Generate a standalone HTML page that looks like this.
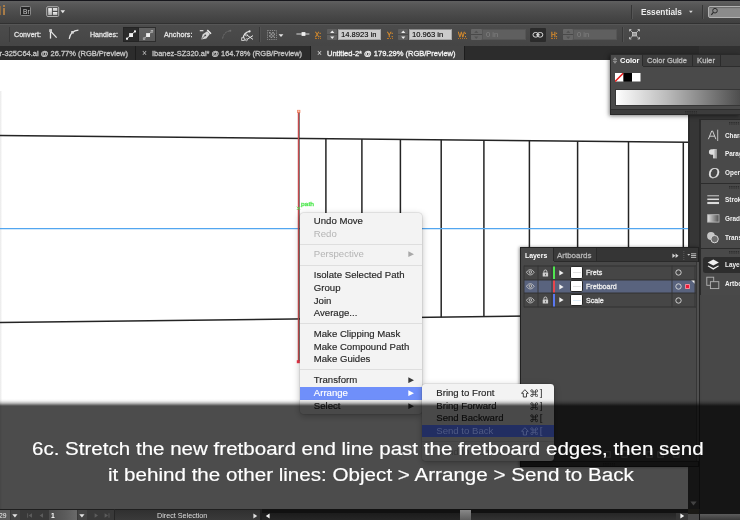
<!DOCTYPE html>
<html><head><meta charset="utf-8"><title>Illustrator</title>
<style>
html,body{margin:0;padding:0;}
body{width:740px;height:520px;overflow:hidden;position:relative;background:#3c3c3c;font-family:"Liberation Sans",sans-serif;}
#root{position:absolute;left:0;top:0;width:740px;height:520px;overflow:hidden;will-change:transform;}
span{display:block}
</style></head><body><div id="root">
<div style="position:absolute;left:0px;top:60px;width:688px;height:460px;background:#ffffff;"></div>
<div style="position:absolute;left:0px;top:91px;width:2.4px;height:430px;background:linear-gradient(90deg,#ebebeb,#f1f1f1 55%,#ffffff);"></div>
<svg style="position:absolute;left:0px;top:0px;" width="740" height="520" viewBox="0 0 740 520"><line x1="0" y1="135.40" x2="688" y2="142.35" stroke="#242424" stroke-width="1.5"/><line x1="0" y1="322.60" x2="688" y2="314.10" stroke="#242424" stroke-width="1.5"/><line x1="325.9" y1="138.69" x2="325.9" y2="318.58" stroke="#242424" stroke-width="1.5"/><line x1="361.9" y1="139.06" x2="361.9" y2="318.13" stroke="#242424" stroke-width="1.5"/><line x1="400.4" y1="139.44" x2="400.4" y2="317.66" stroke="#242424" stroke-width="1.5"/><line x1="441.2" y1="139.86" x2="441.2" y2="317.15" stroke="#242424" stroke-width="1.5"/><line x1="483.9" y1="140.29" x2="483.9" y2="316.62" stroke="#242424" stroke-width="1.5"/><line x1="529.4" y1="140.75" x2="529.4" y2="316.06" stroke="#242424" stroke-width="1.5"/><line x1="577.6" y1="141.23" x2="577.6" y2="315.47" stroke="#242424" stroke-width="1.5"/><line x1="628.5" y1="141.75" x2="628.5" y2="314.84" stroke="#242424" stroke-width="1.5"/><line x1="683.3" y1="142.30" x2="683.3" y2="314.16" stroke="#242424" stroke-width="1.5"/><line x1="0" y1="228.6" x2="688" y2="228.6" stroke="#52a6f0" stroke-width="1.25"/><line x1="299.1" y1="112" x2="299.1" y2="361" stroke="#4a3434" stroke-width="1.1"/><line x1="298.4" y1="111" x2="298.4" y2="362" stroke="#c64a4c" stroke-width="1.25"/><rect x="297.100" y="109.900" width="3.200" height="3" fill="#ee7a58"/><rect x="297.700" y="110.500" width="1.900" height="1.300" fill="#ffd2c0"/><rect x="296.8" y="360.2" width="3" height="3" fill="#ea3648"/><path d="M296.9 206.7l3.2 3.2m0-3.2l-3.2 3.2" stroke="#4ee44e" stroke-width=".9"/></svg>
<span style="position:absolute;top:200px;line-height:8px;font-size:5.4px;white-space:pre;color:#52e852;-webkit-text-stroke:.3px #52e852;left:301.10px;transform-origin:0 50%;transform:scaleX(1.237);">path</span>
<div style="position:absolute;left:0px;top:0px;width:740px;height:24px;background:linear-gradient(#626262,#575757 20%,#4d4d4d 48%,#454545 75%,#3f3f3f);"></div>
<div style="position:absolute;left:0px;top:0px;width:740px;height:1px;background:#17171c;"></div>
<div style="position:absolute;left:0px;top:23px;width:740px;height:1px;background:#313131;"></div>
<div style="position:absolute;left:0px;top:5.5px;width:1px;height:9.3px;background:#8e6a40;"></div>
<div style="position:absolute;left:2.8px;top:8px;width:1.8px;height:6.7px;background:#a87c48;"></div>
<div style="position:absolute;left:2.8px;top:5.3px;width:1.8px;height:1.6px;background:#a87c48;"></div>
<div style="position:absolute;left:20px;top:6px;width:9px;height:8.4px;background:#262626;border:1px solid #8a8a8a;border-radius:1.500px;box-sizing:content-box;"></div>
<span style="position:absolute;top:7px;line-height:10px;font-size:6.8px;white-space:pre;color:#cfcfcf;left:22.60px;transform-origin:0 50%;transform:scaleX(0.971);">Br</span>
<svg style="position:absolute;left:45.5px;top:5.5px;" width="20" height="13" viewBox="0 0 20 13"><rect x=".7" y=".7" width="12" height="9.800" rx="1.200" fill="#4a4a4a" stroke="#b0b0b0" stroke-width="1"/><defs><linearGradient id="lg1" x1="0" y1="0" x2="0" y2="1"><stop offset="0" stop-color="#f6f6f6"/><stop offset="1" stop-color="#b0b0b0"/></linearGradient></defs><rect x="2.200" y="2.100" width="3.700" height="7" fill="url(#lg1)"/><rect x="6.900" y="2.100" width="4.400" height="2.900" fill="url(#lg1)"/><rect x="6.900" y="6" width="4.400" height="3.100" fill="url(#lg1)"/><path d="M14.500 4.300h4.600l-2.300 3z" fill="#e6e6e6"/></svg>
<div style="position:absolute;left:631px;top:4.5px;width:1px;height:14px;background:#363636;"></div>
<div style="position:absolute;left:632px;top:4.5px;width:1px;height:14px;background:#555;"></div>
<span style="position:absolute;top:7px;line-height:11px;font-size:8.2px;white-space:pre;color:#efefef;font-weight:bold;left:641.00px;transform-origin:0 50%;transform:scaleX(1.011);">Essentials</span>
<svg style="position:absolute;left:688px;top:9.8px;" width="6" height="4" viewBox="0 0 6 4"><path d="M1 .8h3.800l-1.900 2.300z" fill="#d8d8d8"/></svg>
<div style="position:absolute;left:702px;top:4.5px;width:1px;height:14px;background:#363636;"></div>
<div style="position:absolute;left:703px;top:4.5px;width:1px;height:14px;background:#555;"></div>
<div style="position:absolute;left:707.5px;top:5.5px;width:40px;height:12.4px;background:#8b8b8b;border:1px solid #b2b2b2;border-radius:2px;box-sizing:border-box;box-shadow:inset 0 1px 1px rgba(0,0,0,.25);"></div>
<svg style="position:absolute;left:709.5px;top:7px;" width="9" height="9" viewBox="0 0 9 9"><circle cx="5" cy="3.700" r="2.300" fill="none" stroke="#2c2c2c" stroke-width="1"/><path d="M3.400 5.400L1.300 7.900" stroke="#2c2c2c" stroke-width="1.200"/></svg>
<div style="position:absolute;left:0px;top:24px;width:740px;height:22px;background:linear-gradient(#4c4c4c,#454545);"></div>
<div style="position:absolute;left:0px;top:24px;width:740px;height:1px;background:#565656;"></div>
<div style="position:absolute;left:8.5px;top:27px;width:1px;height:15px;background:#3a3a3a;"></div>
<span style="position:absolute;top:29px;line-height:11px;font-size:7.9px;white-space:pre;color:#e4e4e4;-webkit-text-stroke:.3px #e4e4e4;left:13.50px;transform-origin:0 50%;transform:scaleX(0.904);">Convert:</span>
<svg style="position:absolute;left:47px;top:28px;" width="12" height="12" viewBox="0 0 12 12"><path d="M3.5 1.6v9" stroke="#e8e8e8" stroke-width="1.3"/><path d="M3.8 3.4L9.6 9.6" stroke="#e8e8e8" stroke-width="1.2"/><rect x="2.2" y="1.2" width="2.8" height="2.8" fill="#cfcfcf"/></svg>
<svg style="position:absolute;left:67px;top:28px;" width="13" height="12" viewBox="0 0 13 12"><path d="M2.2 10.8C3 6.2 5.4 2.6 11.4 2.2" fill="none" stroke="#e8e8e8" stroke-width="1.2"/><rect x="4.2" y="3" width="2.6" height="2.6" fill="#d8d8d8"/></svg>
<span style="position:absolute;top:29px;line-height:11px;font-size:7.9px;white-space:pre;color:#e4e4e4;-webkit-text-stroke:.3px #e4e4e4;left:89.50px;transform-origin:0 50%;transform:scaleX(0.898);">Handles:</span>
<div style="position:absolute;left:123px;top:27px;width:16.4px;height:14.6px;background:#2b2b2b;border:1px solid #242424;box-sizing:border-box;"></div>
<div style="position:absolute;left:139.4px;top:27px;width:17px;height:14.6px;background:linear-gradient(#626262,#585858);border:1px solid #2e2e2e;border-left:none;box-sizing:border-box;"></div>
<svg style="position:absolute;left:125px;top:28.5px;" width="12" height="12" viewBox="0 0 12 12"><path d="M2 9.600L10 2.400" stroke="#dcdcdc" stroke-width=".9"/><rect x="4.100" y="4.100" width="3.900" height="3.900" fill="#f0f0f0"/><rect x="1" y="8.700" width="2" height="2" fill="#f4f4f4"/><rect x="9" y="1.400" width="2" height="2" fill="#f4f4f4"/></svg>
<svg style="position:absolute;left:141.7px;top:28.5px;" width="12" height="12" viewBox="0 0 12 12"><path d="M2 9.600L10 2.400" stroke="#c4c4c4" stroke-width=".8"/><rect x="4.100" y="4.100" width="3.900" height="3.900" fill="#ededed"/><rect x="1.200" y="8.900" width="1.700" height="1.700" fill="#5c5c5c" stroke="#c8c8c8" stroke-width=".6"/><rect x="9.100" y="1.500" width="1.700" height="1.700" fill="#5c5c5c" stroke="#c8c8c8" stroke-width=".6"/></svg>
<span style="position:absolute;top:29px;line-height:11px;font-size:7.9px;white-space:pre;color:#e4e4e4;-webkit-text-stroke:.3px #e4e4e4;left:164.00px;transform-origin:0 50%;transform:scaleX(0.914);">Anchors:</span>
<svg style="position:absolute;left:198.5px;top:29px;" width="13" height="12" viewBox="0 0 13 12"><path d="M2.200 10.400L3.700 5.200 8.200 2.200 10.800 5 7.400 9.400z" fill="#d4d4d4"/><path d="M2.400 10.200L6 6.600" stroke="#4a4a4a" stroke-width=".8"/><circle cx="6.300" cy="6.300" r=".9" fill="#4a4a4a"/><path d="M8.300 1L12 4.800" stroke="#ececec" stroke-width="1.500"/><path d="M.8 1.700h3.600" stroke="#ececec" stroke-width="1.100"/></svg>
<svg style="position:absolute;left:220.5px;top:29px;" width="12" height="12" viewBox="0 0 12 12"><path d="M1.600 9.600C2.200 5.400 4.600 2.600 8.800 1.800" fill="none" stroke="#6c6c6c" stroke-width="1" stroke-dasharray="2.200 .8"/><circle cx="9.300" cy="1.700" r="1" fill="#6c6c6c"/></svg>
<svg style="position:absolute;left:240.5px;top:28.5px;" width="14" height="13" viewBox="0 0 14 13"><path d="M2 9.800C2.400 5.800 4.600 3.200 8.400 2.400" fill="none" stroke="#e4e4e4" stroke-width="1.100"/><rect x=".7" y="8.800" width="2.600" height="2.600" fill="#4a4a4a" stroke="#e4e4e4" stroke-width=".8"/><circle cx="8.600" cy="2.300" r="1.100" fill="#e4e4e4"/><path d="M6 6.200L12 10.400M6 10.400L12 6.600" stroke="#e4e4e4" stroke-width="1"/><circle cx="5.400" cy="10.800" r="1" fill="none" stroke="#e4e4e4" stroke-width=".7"/><circle cx="5.400" cy="6" r="1" fill="none" stroke="#e4e4e4" stroke-width=".7"/></svg>
<div style="position:absolute;left:259px;top:27px;width:1px;height:15px;background:#383838;"></div>
<div style="position:absolute;left:260px;top:27px;width:1px;height:15px;background:#525252;"></div>
<svg style="position:absolute;left:267px;top:29.5px;" width="18" height="11" viewBox="0 0 18 11"><rect x=".5" y=".5" width="9" height="9" fill="none" stroke="#9a9a9a" stroke-width=".8" stroke-dasharray="1.200 1"/><path d="M2 2h1.600v1.600H2zM5.200 2h1.600v1.600H5.200zM3.600 3.600h1.600v1.600H3.600zM6.800 3.600h1.200v1.600H6.800zM2 5.200h1.600v1.600H2zM5.200 5.200h1.600v1.600H5.200zM3.600 6.800h1.600V8H3.600zM6.800 6.800h1.200V8H6.800z" fill="#9a9a9a"/><path d="M11.600 4.200h4.800l-2.400 2.800z" fill="#e4e4e4"/></svg>
<svg style="position:absolute;left:295.7px;top:31.2px;" width="14" height="7" viewBox="0 0 14 7"><path d="M.4 3h13" stroke="#d8d8d8" stroke-width="1"/><rect x="5.600" y="1.100" width="3.800" height="3.800" fill="#f0f0f0"/></svg>
<span style="position:absolute;top:29px;line-height:11px;font-size:7.8px;white-space:pre;color:#dc8e2c;-webkit-text-stroke:.3px #dc8e2c;left:315.00px;transform-origin:0 50%;transform:scaleX(0.814);">X:</span>
<div style="position:absolute;left:315px;top:38px;width:6px;height:1px;background:transparent;border-bottom:1px dotted #b87424;height:0;"></div>
<div style="position:absolute;left:326.5px;top:28.6px;width:10.5px;height:5.4px;background:#5e5e5e;border-radius:1px 1px 0 0;"></div>
<div style="position:absolute;left:326.5px;top:34.6px;width:10.5px;height:5.4px;background:#5e5e5e;border-radius:0 0 1px 1px;"></div>
<svg style="position:absolute;left:326.5px;top:28.6px;" width="10.5" height="11.4" viewBox="0 0 10.5 11.4"><path d="M3.15 4h4.2l-2.1-2.5zM3.15 7.4h4.2l-2.1 2.5z" fill="#ececec"/></svg>
<div style="position:absolute;left:337.8px;top:28.6px;width:43.4px;height:11.5px;background:#cccccc;border:1px solid #a8a8a8;border-top-color:#8a8a8a;box-sizing:border-box;"></div>
<span style="position:absolute;top:29px;line-height:11px;font-size:8px;white-space:pre;color:#1c1c1c;left:341.00px;transform-origin:0 50%;transform:scaleX(0.950);text-shadow:0 0 .4px rgba(0,0,0,.6);">14.8923 in</span>
<span style="position:absolute;top:29px;line-height:11px;font-size:7.8px;white-space:pre;color:#dc8e2c;-webkit-text-stroke:.3px #dc8e2c;left:387.00px;transform-origin:0 50%;transform:scaleX(0.865);">Y:</span>
<div style="position:absolute;left:387px;top:38px;width:6px;height:1px;background:transparent;border-bottom:1px dotted #b87424;height:0;"></div>
<div style="position:absolute;left:397.5px;top:28.6px;width:10.5px;height:5.4px;background:#5e5e5e;border-radius:1px 1px 0 0;"></div>
<div style="position:absolute;left:397.5px;top:34.6px;width:10.5px;height:5.4px;background:#5e5e5e;border-radius:0 0 1px 1px;"></div>
<svg style="position:absolute;left:397.5px;top:28.6px;" width="10.5" height="11.4" viewBox="0 0 10.5 11.4"><path d="M3.15 4h4.2l-2.1-2.5zM3.15 7.4h4.2l-2.1 2.5z" fill="#ececec"/></svg>
<div style="position:absolute;left:408.8px;top:28.6px;width:43.7px;height:11.5px;background:#cccccc;border:1px solid #a8a8a8;border-top-color:#8a8a8a;box-sizing:border-box;"></div>
<span style="position:absolute;top:29px;line-height:11px;font-size:8px;white-space:pre;color:#1c1c1c;left:412.00px;transform-origin:0 50%;transform:scaleX(0.950);text-shadow:0 0 .4px rgba(0,0,0,.6);">10.963 in</span>
<span style="position:absolute;top:29px;line-height:11px;font-size:7.8px;white-space:pre;color:#dc8e2c;-webkit-text-stroke:.3px #dc8e2c;left:458.00px;transform-origin:0 50%;transform:scaleX(0.905);">W:</span>
<div style="position:absolute;left:458px;top:38px;width:8.5px;height:1px;background:transparent;border-bottom:1px dotted #b87424;height:0;"></div>
<div style="position:absolute;left:471px;top:28.6px;width:10.5px;height:5.4px;background:#666666;border-radius:1px 1px 0 0;"></div>
<div style="position:absolute;left:471px;top:34.6px;width:10.5px;height:5.4px;background:#666666;border-radius:0 0 1px 1px;"></div>
<svg style="position:absolute;left:471px;top:28.6px;" width="10.5" height="11.4" viewBox="0 0 10.5 11.4"><path d="M3.15 4h4.2l-2.1-2.5zM3.15 7.4h4.2l-2.1 2.5z" fill="#525252"/></svg>
<div style="position:absolute;left:482px;top:28.6px;width:43.5px;height:11.5px;background:#5f5f5f;border:1px solid #555;box-sizing:border-box;"></div>
<span style="position:absolute;top:29px;line-height:11px;font-size:8px;white-space:pre;color:#808080;left:485.50px;transform-origin:0 50%;transform:scaleX(0.950);">0 in</span>
<div style="position:absolute;left:530px;top:27.5px;width:15.5px;height:14px;background:#2b2b2b;border-radius:1px;"></div>
<svg style="position:absolute;left:532px;top:30.5px;" width="12" height="8" viewBox="0 0 12 8"><rect x="1" y="1.500" width="5.400" height="4.600" rx="2.300" fill="none" stroke="#e0e0e0" stroke-width=".95"/><rect x="5.400" y="1.500" width="5.400" height="4.600" rx="2.300" fill="none" stroke="#e0e0e0" stroke-width=".95"/><path d="M4 3.800h3.800" stroke="#e0e0e0" stroke-width=".95"/></svg>
<span style="position:absolute;top:29px;line-height:11px;font-size:7.8px;white-space:pre;color:#dc8e2c;-webkit-text-stroke:.3px #dc8e2c;left:550.50px;transform-origin:0 50%;transform:scaleX(0.833);">H:</span>
<div style="position:absolute;left:550.5px;top:38px;width:6.5px;height:1px;background:transparent;border-bottom:1px dotted #b87424;height:0;"></div>
<div style="position:absolute;left:562.5px;top:28.6px;width:10.5px;height:5.4px;background:#666666;border-radius:1px 1px 0 0;"></div>
<div style="position:absolute;left:562.5px;top:34.6px;width:10.5px;height:5.4px;background:#666666;border-radius:0 0 1px 1px;"></div>
<svg style="position:absolute;left:562.5px;top:28.6px;" width="10.5" height="11.4" viewBox="0 0 10.5 11.4"><path d="M3.15 4h4.2l-2.1-2.5zM3.15 7.4h4.2l-2.1 2.5z" fill="#525252"/></svg>
<div style="position:absolute;left:573px;top:28.6px;width:44px;height:11.5px;background:#5f5f5f;border:1px solid #555;box-sizing:border-box;"></div>
<span style="position:absolute;top:29px;line-height:11px;font-size:8px;white-space:pre;color:#808080;left:576.50px;transform-origin:0 50%;transform:scaleX(0.950);">0 in</span>
<div style="position:absolute;left:622px;top:27px;width:1px;height:15px;background:#383838;"></div>
<div style="position:absolute;left:623px;top:27px;width:1px;height:15px;background:#525252;"></div>
<svg style="position:absolute;left:629.3px;top:29px;" width="11" height="10.5" viewBox="0 0 11 10.5"><rect x="3.600" y="3.400" width="3.800" height="3.600" fill="#9a9a9a" stroke="#d8d8d8" stroke-width=".7"/><path d="M1 1l2.400 2.200M10 1L7.600 3.200M1 9.500l2.400-2.300M10 9.500L7.600 7.200" stroke="#d0d0d0" stroke-width=".8"/><path d="M.5.500h1.900M.5.500v1.900M10.500.5H8.600M10.500.5v1.900M.5 10h1.900M.5 10V8.100M10.500 10H8.600M10.500 10V8.100" stroke="#d0d0d0" stroke-width=".8"/></svg>
<div style="position:absolute;left:0px;top:46px;width:740px;height:14px;background:#2c2c2c;"></div>
<span style="position:absolute;top:48px;line-height:11px;font-size:7.5px;white-space:pre;color:#c6c6c6;-webkit-text-stroke:.3px #c6c6c6;left:-0.50px;transform-origin:0 50%;">r-325C64.ai @ 26.77% (RGB/Preview)</span>
<div style="position:absolute;left:134.5px;top:46px;width:1px;height:14px;background:#1d1d1d;"></div>
<span style="position:absolute;top:48px;line-height:11px;font-size:8.5px;white-space:pre;color:#c0c0c0;left:142.00px;transform-origin:0 50%;">×</span>
<span style="position:absolute;top:48px;line-height:11px;font-size:7.5px;white-space:pre;color:#c6c6c6;-webkit-text-stroke:.3px #c6c6c6;left:152.00px;transform-origin:0 50%;transform:scaleX(0.991);">Ibanez-SZ320.ai* @ 164.78% (RGB/Preview)</span>
<div style="position:absolute;left:309.5px;top:46px;width:1px;height:14px;background:#1d1d1d;"></div>
<div style="position:absolute;left:310.5px;top:46px;width:153.5px;height:14px;background:#464646;"></div>
<span style="position:absolute;top:48px;line-height:11px;font-size:8.5px;white-space:pre;color:#d8d8d8;left:317.00px;transform-origin:0 50%;">×</span>
<span style="position:absolute;top:48px;line-height:11px;font-size:7.5px;white-space:pre;color:#f4f4f4;-webkit-text-stroke:.3px #f4f4f4;left:327.00px;transform-origin:0 50%;">Untitled-2* @ 179.29% (RGB/Preview)</span>
<div style="position:absolute;left:464px;top:46px;width:1px;height:14px;background:#1d1d1d;"></div>
<div style="position:absolute;left:688px;top:60px;width:52px;height:460px;background:#363636;"></div>
<div style="position:absolute;left:688px;top:60px;width:1.5px;height:460px;background:#2c2c2c;"></div>
<div style="position:absolute;left:700px;top:295px;width:40px;height:225px;background:#484848;"></div>
<div style="position:absolute;left:699px;top:119px;width:1px;height:401px;background:#2a2a2a;"></div>
<div style="position:absolute;left:699.5px;top:119px;width:41px;height:176px;background:#494949;border-left:1px solid #2c2c2c;border-top:1px solid #2a2a2a;box-sizing:border-box;"></div>
<svg style="position:absolute;left:729px;top:121.6px;" width="12" height="3" viewBox="0 0 12 3"><path d="M0 .5h12M0 2h12" stroke="#2a2a2a" stroke-width=".9" stroke-dasharray="1.4 .8"/></svg>
<svg style="position:absolute;left:706px;top:128px;" width="14" height="14" viewBox="0 0 14 14"><path d="M2.400 11.200L5.700 3h.9L9.900 11.200M3.600 8.200h5.100" fill="none" stroke="#cfcfcf" stroke-width="1"/><path d="M11.700 1.700v11.300" stroke="#cfcfcf" stroke-width=".9"/></svg>
<span style="position:absolute;top:130px;line-height:11px;font-size:8px;white-space:pre;color:#f2f2f2;font-weight:bold;left:725.20px;transform-origin:0 50%;transform:scaleX(0.800);">Chara</span>
<svg style="position:absolute;left:707px;top:148px;" width="12" height="12" viewBox="0 0 12 12"><defs><linearGradient id="lgp" x1="0" y1="0" x2="1" y2="0"><stop offset="0" stop-color="#e2e2e2"/><stop offset="1" stop-color="#8e8e8e"/></linearGradient></defs><path d="M4.600 1.300h5.200v9H8.500V2.400H7.600v7.900H6.300V6.700H4.600A2.700 2.700 0 014.600 1.300z" fill="#dedede"/><rect x="6.300" y="1.300" width="3.500" height="9" fill="url(#lgp)"/></svg>
<span style="position:absolute;top:148px;line-height:11px;font-size:8px;white-space:pre;color:#f2f2f2;font-weight:bold;left:725.20px;transform-origin:0 50%;transform:scaleX(0.800);">Parag</span>
<span style="position:absolute;left:708.2px;top:163px;font-family:'Liberation Serif',serif;font-style:italic;font-size:15.5px;line-height:19px;color:#e6e6e6;-webkit-text-stroke:.25px #e6e6e6;">O</span>
<span style="position:absolute;top:167px;line-height:11px;font-size:8px;white-space:pre;color:#f2f2f2;font-weight:bold;left:725.20px;transform-origin:0 50%;transform:scaleX(0.800);">Open</span>
<div style="position:absolute;left:700.5px;top:183.2px;width:40px;height:1px;background:#2c2c2c;"></div>
<svg style="position:absolute;left:729px;top:186px;" width="12" height="3" viewBox="0 0 12 3"><path d="M0 .5h12M0 2h12" stroke="#2a2a2a" stroke-width=".9" stroke-dasharray="1.4 .8"/></svg>
<svg style="position:absolute;left:706px;top:193px;" width="14" height="12" viewBox="0 0 14 12"><path d="M1.300 2.800h11.700" stroke="#dcdcdc" stroke-width=".9"/><path d="M1.300 6.300h11.700" stroke="#dcdcdc" stroke-width="1.500"/><path d="M1.300 10h11.700" stroke="#dcdcdc" stroke-width="2.100"/></svg>
<span style="position:absolute;top:194px;line-height:11px;font-size:8px;white-space:pre;color:#f2f2f2;font-weight:bold;left:725.20px;transform-origin:0 50%;transform:scaleX(0.800);">Strok</span>
<svg style="position:absolute;left:706px;top:213px;" width="15" height="11" viewBox="0 0 15 11"><defs><linearGradient id="lg2"><stop offset="0" stop-color="#e0e0e0"/><stop offset="1" stop-color="#4e4e4e"/></linearGradient></defs><rect x="1.600" y="1.700" width="11.400" height="7.400" fill="url(#lg2)" stroke="#b4b4b4" stroke-width=".9"/></svg>
<span style="position:absolute;top:213px;line-height:11px;font-size:8px;white-space:pre;color:#f2f2f2;font-weight:bold;left:725.20px;transform-origin:0 50%;transform:scaleX(0.800);">Gradi</span>
<svg style="position:absolute;left:705px;top:230px;" width="16" height="15" viewBox="0 0 16 15"><circle cx="6" cy="6" r="3.900" fill="#c6c6c6"/><circle cx="9.600" cy="9.100" r="3.700" fill="#6e6e6e" stroke="#dadada" stroke-width="1"/></svg>
<span style="position:absolute;top:232px;line-height:11px;font-size:8px;white-space:pre;color:#f2f2f2;font-weight:bold;left:725.20px;transform-origin:0 50%;transform:scaleX(0.800);">Trans</span>
<div style="position:absolute;left:700.5px;top:248.3px;width:40px;height:1px;background:#2c2c2c;"></div>
<svg style="position:absolute;left:729px;top:251px;" width="12" height="3" viewBox="0 0 12 3"><path d="M0 .5h12M0 2h12" stroke="#2a2a2a" stroke-width=".9" stroke-dasharray="1.4 .8"/></svg>
<div style="position:absolute;left:703px;top:256.5px;width:40px;height:16px;background:#2d2d2d;border-radius:2.500px;"></div>
<svg style="position:absolute;left:706px;top:258px;" width="15" height="14" viewBox="0 0 15 14"><path d="M7.300 1.600L12.900 4.600 7.300 7.600 1.700 4.600z" fill="#f0f0f0"/><path d="M2.300 7.400L7.300 10.100 12.300 7.400 12.900 8.300 7.300 11.800 1.700 8.300z" fill="#f0f0f0"/></svg>
<span style="position:absolute;top:259px;line-height:11px;font-size:8px;white-space:pre;color:#f2f2f2;font-weight:bold;left:725.20px;transform-origin:0 50%;transform:scaleX(0.800);">Layer</span>
<svg style="position:absolute;left:705px;top:276px;" width="16" height="14" viewBox="0 0 16 14"><rect x="1.800" y="1.200" width="6.900" height="8.100" fill="none" stroke="#b4b4b4" stroke-width=".9"/><rect x="5.400" y="5.700" width="8.400" height="6.900" fill="#474747" stroke="#b4b4b4" stroke-width=".9"/></svg>
<span style="position:absolute;top:278px;line-height:11px;font-size:8px;white-space:pre;color:#f2f2f2;font-weight:bold;left:725.20px;transform-origin:0 50%;transform:scaleX(0.800);">Artbo</span>
<div style="position:absolute;left:699px;top:46px;width:41px;height:9px;background:#313131;"></div>
<div style="position:absolute;left:610px;top:54px;width:130px;height:60.5px;background:#4a4a4a;box-shadow:-1px 1px 4px rgba(0,0,0,.5);border:1px solid #2a2a2a;border-right:none;box-sizing:border-box;"></div>
<div style="position:absolute;left:611px;top:55px;width:129px;height:11px;background:#3f3f3f;"></div>
<div style="position:absolute;left:611px;top:55px;width:30.5px;height:11.6px;background:#4a4a4a;"></div>
<div style="position:absolute;left:641.5px;top:55px;width:1px;height:11px;background:#2b2b2b;"></div>
<div style="position:absolute;left:642.5px;top:55px;width:49px;height:10.5px;background:#3d3d3d;"></div>
<div style="position:absolute;left:691.5px;top:55px;width:1px;height:11px;background:#2b2b2b;"></div>
<div style="position:absolute;left:692.5px;top:55px;width:27px;height:10.5px;background:#3d3d3d;"></div>
<div style="position:absolute;left:719.5px;top:55px;width:1px;height:11px;background:#2b2b2b;"></div>
<div style="position:absolute;left:642.5px;top:65.6px;width:98px;height:1px;background:#2d2d2d;"></div>
<svg style="position:absolute;left:613px;top:57.3px;" width="4" height="7" viewBox="0 0 4 7"><path d="M.5 2.700L2 .7l1.500 2zM.5 4.300L2 6.300l1.500-2z" fill="none" stroke="#c8c8c8" stroke-width=".6"/></svg>
<span style="position:absolute;top:55px;line-height:11px;font-size:8px;white-space:pre;color:#ffffff;font-weight:bold;left:619.50px;transform-origin:0 50%;transform:scaleX(0.934);">Color</span>
<span style="position:absolute;top:55px;line-height:11px;font-size:7.7px;white-space:pre;color:#bdbdbd;-webkit-text-stroke:.3px #bdbdbd;left:647.00px;transform-origin:0 50%;transform:scaleX(0.974);">Color Guide</span>
<span style="position:absolute;top:55px;line-height:11px;font-size:7.7px;white-space:pre;color:#bdbdbd;-webkit-text-stroke:.3px #bdbdbd;left:697.00px;transform-origin:0 50%;">Kuler</span>
<svg style="position:absolute;left:614.5px;top:73px;" width="26" height="9" viewBox="0 0 26 9"><rect x="0" y="0" width="8.500" height="8.500" fill="#fff"/><path d="M0 8.500L8.500 0" stroke="#e81818" stroke-width="1.500"/><rect x="8.500" y="0" width="8.500" height="8.500" fill="#000"/><rect x="17" y="0" width="8.500" height="8.500" fill="#fff"/></svg>
<div style="position:absolute;left:615px;top:89px;width:125px;height:16.5px;background:linear-gradient(90deg,#ffffff,#f4f4f4 6%,#bdbdbd 40%,#4e4e4e);border:1px solid #363636;border-right:none;box-sizing:border-box;"></div>
<div style="position:absolute;left:611px;top:109.3px;width:129px;height:5px;background:#3c3c3c;border-top:1px solid #2e2e2e;box-sizing:border-box;"></div>
<svg style="position:absolute;left:685px;top:111px;" width="12" height="3" viewBox="0 0 12 3"><path d="M0 .5h12M0 2h12" stroke="#2a2a2a" stroke-width=".9" stroke-dasharray="1.4 .8"/></svg>
<div style="position:absolute;left:520px;top:247px;width:179px;height:219.5px;background:#484848;border:1px solid #222;box-sizing:border-box;box-shadow:-1px 0 3px rgba(0,0,0,.4);"></div>
<div style="position:absolute;left:521px;top:248px;width:177px;height:13px;background:#353535;"></div>
<div style="position:absolute;left:521px;top:248px;width:31.5px;height:13.6px;background:#484848;"></div>
<div style="position:absolute;left:552.5px;top:248px;width:1px;height:13px;background:#282828;"></div>
<div style="position:absolute;left:553.5px;top:248px;width:42px;height:12.6px;background:#3a3a3a;"></div>
<div style="position:absolute;left:595.5px;top:248px;width:1px;height:13px;background:#2a2a2a;"></div>
<div style="position:absolute;left:553.5px;top:260.6px;width:144.5px;height:1px;background:#2a2a2a;"></div>
<span style="position:absolute;top:250px;line-height:11px;font-size:8px;white-space:pre;color:#ffffff;font-weight:bold;left:525.20px;transform-origin:0 50%;transform:scaleX(0.861);">Layers</span>
<span style="position:absolute;top:250px;line-height:11px;font-size:7.7px;white-space:pre;color:#b4b4b4;-webkit-text-stroke:.3px #b4b4b4;left:556.50px;transform-origin:0 50%;transform:scaleX(1.033);">Artboards</span>
<svg style="position:absolute;left:671.5px;top:253px;" width="8" height="6" viewBox="0 0 8 6"><path d="M.4.400L3.300 2.700.4 5zM3.600.400L6.500 2.700 3.600 5z" fill="#d4d4d4"/></svg>
<svg style="position:absolute;left:682.5px;top:250.5px;" width="2" height="10" viewBox="0 0 2 10"><path d="M.8 0v10" stroke="#5a5a5a" stroke-width="1" stroke-dasharray="1 1"/></svg>
<svg style="position:absolute;left:687px;top:253px;" width="10" height="6" viewBox="0 0 10 6"><path d="M.3.900h2.900L1.750 2.700z" fill="#d0d0d0"/><path d="M4 .8h5.200M4 2.600h5.200M4 4.400h5.200" stroke="#bdbdbd" stroke-width="1"/></svg>
<div style="position:absolute;left:524.4px;top:265.6px;width:171px;height:41.6px;background:#464646;"></div>
<svg style="position:absolute;left:526.3px;top:269.3px;" width="9" height="7" viewBox="0 0 9 7"><path d="M.4 3.300C1.800 1.300 3 .7 4.300.7S6.800 1.300 8.200 3.300C6.800 5.300 5.600 5.900 4.300 5.900S1.800 5.300.4 3.300z" fill="none" stroke="#c4c4c4" stroke-width=".9"/><circle cx="4.300" cy="3.100" r="1.700" fill="#c8c8c8"/><circle cx="4.300" cy="3.100" r=".8" fill="#3c3c3c"/></svg>
<svg style="position:absolute;left:541.7px;top:268.6px;" width="7" height="8" viewBox="0 0 7 8"><path d="M1.900 3.600V2.500a1.500 1.500 0 013 0v1.100" fill="none" stroke="#cfcfcf" stroke-width="1"/><rect x=".7" y="3.600" width="5.400" height="4" rx=".5" fill="#cfcfcf"/><rect x="3" y="4.800" width=".9" height="1.600" fill="#555"/></svg>
<div style="position:absolute;left:552.8px;top:266.20000000000005px;width:2.7px;height:12.9px;background:#50e650;"></div>
<svg style="position:absolute;left:559.3px;top:269.70000000000005px;" width="5" height="6" viewBox="0 0 5 6"><path d="M.3.200L4.600 2.900.3 5.600z" fill="#f0f0f0"/></svg>
<div style="position:absolute;left:570.2px;top:266.20px;width:12.600px;height:12.60px;background:#fff;border:1px solid #262626;border-radius:1.800px;box-sizing:border-box;"></div>
<div style="position:absolute;left:572.5px;top:272.40000000000003px;width:8px;height:0.7px;background:#e2e2e2;"></div>
<span style="position:absolute;top:267px;line-height:11px;font-size:7.7px;white-space:pre;color:#ececec;-webkit-text-stroke:.3px #ececec;left:586.00px;transform-origin:0 50%;transform:scaleX(0.925);">Frets</span>
<svg style="position:absolute;left:675px;top:269.1px;" width="7" height="7" viewBox="0 0 7 7"><circle cx="3.500" cy="3.500" r="2.700" fill="none" stroke="#dcdcdc" stroke-width=".9"/></svg>
<div style="position:absolute;left:524.4px;top:279.6px;width:171px;height:13.599999999999966px;background:#59637e;"></div>
<svg style="position:absolute;left:526.3px;top:283.09999999999997px;" width="9" height="7" viewBox="0 0 9 7"><path d="M.4 3.300C1.800 1.300 3 .7 4.300.7S6.800 1.300 8.200 3.300C6.800 5.300 5.600 5.900 4.300 5.900S1.800 5.300.4 3.300z" fill="none" stroke="#c4c4c4" stroke-width=".9"/><circle cx="4.300" cy="3.100" r="1.700" fill="#c8c8c8"/><circle cx="4.300" cy="3.100" r=".8" fill="#3c3c3c"/></svg>
<div style="position:absolute;left:552.8px;top:280.20000000000005px;width:2.7px;height:12.499999999999966px;background:#e6464e;"></div>
<svg style="position:absolute;left:559.3px;top:283.5px;" width="5" height="6" viewBox="0 0 5 6"><path d="M.3.200L4.600 2.900.3 5.600z" fill="#f0f0f0"/></svg>
<div style="position:absolute;left:570.2px;top:280.20px;width:12.600px;height:12.20px;background:#fff;border:1px solid #262626;border-radius:1.800px;box-sizing:border-box;"></div>
<div style="position:absolute;left:572.5px;top:286.2px;width:8px;height:0.7px;background:#e2e2e2;"></div>
<span style="position:absolute;top:281px;line-height:11px;font-size:7.7px;white-space:pre;color:#ececec;-webkit-text-stroke:.3px #ececec;left:586.00px;transform-origin:0 50%;transform:scaleX(0.925);">Fretboard</span>
<svg style="position:absolute;left:675px;top:282.9px;" width="7" height="7" viewBox="0 0 7 7"><circle cx="3.500" cy="3.500" r="2.700" fill="none" stroke="#dcdcdc" stroke-width=".9"/></svg>
<div style="position:absolute;left:685.4px;top:284.09999999999997px;width:4.6px;height:4.6px;background:#ea1a38;border:.6px solid #f08a98;border-radius:.8px;box-sizing:border-box;"></div>
<svg style="position:absolute;left:691.4px;top:279.6px;" width="4" height="4" viewBox="0 0 4 4"><path d="M0 0h4v4z" fill="#f0f0f0"/></svg>
<svg style="position:absolute;left:526.3px;top:296.9px;" width="9" height="7" viewBox="0 0 9 7"><path d="M.4 3.300C1.800 1.300 3 .7 4.300.7S6.800 1.300 8.200 3.300C6.800 5.300 5.600 5.900 4.300 5.900S1.800 5.300.4 3.300z" fill="none" stroke="#c4c4c4" stroke-width=".9"/><circle cx="4.300" cy="3.100" r="1.700" fill="#c8c8c8"/><circle cx="4.300" cy="3.100" r=".8" fill="#3c3c3c"/></svg>
<svg style="position:absolute;left:541.7px;top:296.2px;" width="7" height="8" viewBox="0 0 7 8"><path d="M1.900 3.600V2.500a1.500 1.500 0 013 0v1.100" fill="none" stroke="#cfcfcf" stroke-width="1"/><rect x=".7" y="3.600" width="5.400" height="4" rx=".5" fill="#cfcfcf"/><rect x="3" y="4.800" width=".9" height="1.600" fill="#555"/></svg>
<div style="position:absolute;left:552.8px;top:293.8px;width:2.7px;height:12.9px;background:#5a78f0;"></div>
<svg style="position:absolute;left:559.3px;top:297.3px;" width="5" height="6" viewBox="0 0 5 6"><path d="M.3.200L4.600 2.900.3 5.600z" fill="#f0f0f0"/></svg>
<div style="position:absolute;left:570.2px;top:293.80px;width:12.600px;height:12.60px;background:#fff;border:1px solid #262626;border-radius:1.800px;box-sizing:border-box;"></div>
<div style="position:absolute;left:572.5px;top:300.0px;width:8px;height:0.7px;background:#dcecf8;"></div>
<span style="position:absolute;top:295px;line-height:11px;font-size:7.7px;white-space:pre;color:#ececec;-webkit-text-stroke:.3px #ececec;left:586.00px;transform-origin:0 50%;transform:scaleX(0.925);">Scale</span>
<svg style="position:absolute;left:675px;top:296.7px;" width="7" height="7" viewBox="0 0 7 7"><circle cx="3.500" cy="3.500" r="2.700" fill="none" stroke="#dcdcdc" stroke-width=".9"/></svg>
<svg style="position:absolute;left:524px;top:264.6px;" width="172" height="2" viewBox="0 0 172 2"><path d="M0 1h172" stroke="#2f2f2f" stroke-width=".9"/></svg>
<svg style="position:absolute;left:524px;top:278.6px;" width="172" height="2" viewBox="0 0 172 2"><path d="M0 1h172" stroke="#2f2f2f" stroke-width=".9"/></svg>
<svg style="position:absolute;left:524px;top:292.2px;" width="172" height="2" viewBox="0 0 172 2"><path d="M0 1h172" stroke="#2f2f2f" stroke-width=".9"/></svg>
<svg style="position:absolute;left:524px;top:306.2px;" width="172" height="2" viewBox="0 0 172 2"><path d="M0 1h172" stroke="#2f2f2f" stroke-width=".9"/></svg>
<svg style="position:absolute;left:523.4px;top:265px;" width="2" height="43" viewBox="0 0 2 43"><path d="M1 .6v41.600" stroke="#333" stroke-width=".9"/></svg>
<svg style="position:absolute;left:537.3px;top:265px;" width="2" height="43" viewBox="0 0 2 43"><path d="M1 .6v41.600" stroke="#333" stroke-width=".9"/></svg>
<svg style="position:absolute;left:550.8px;top:265px;" width="2" height="43" viewBox="0 0 2 43"><path d="M1 .6v41.600" stroke="#333" stroke-width=".9"/></svg>
<svg style="position:absolute;left:670.5px;top:265px;" width="2" height="43" viewBox="0 0 2 43"><path d="M1 .6v41.600" stroke="#333" stroke-width=".9"/></svg>
<svg style="position:absolute;left:694.4px;top:265px;" width="2" height="43" viewBox="0 0 2 43"><path d="M1 .6v41.600" stroke="#333" stroke-width=".9"/></svg>
<div style="position:absolute;left:695.6px;top:262px;width:1px;height:198.5px;background:#363636;"></div>
<div style="position:absolute;left:696.6px;top:262px;width:2px;height:198.5px;background:#505050;"></div>
<div style="position:absolute;left:521px;top:460.5px;width:177px;height:1px;background:#2a2a2a;"></div>
<div style="position:absolute;left:521px;top:461.5px;width:177px;height:4.5px;background:#3e3e3e;"></div>
<svg style="position:absolute;left:603px;top:463px;" width="12" height="3" viewBox="0 0 12 3"><path d="M0 .5h12M0 2h12" stroke="#2a2a2a" stroke-width=".9" stroke-dasharray="1.4 .8"/></svg>
<svg style="position:absolute;left:604px;top:450.5px;" width="7" height="7" viewBox="0 0 7 7"><rect x=".8" y=".8" width="5.400" height="5.400" fill="none" stroke="#9a9a9a" stroke-width="1"/></svg>
<svg style="position:absolute;left:621px;top:450.5px;" width="7" height="7" viewBox="0 0 7 7"><rect x=".8" y=".8" width="5.400" height="5.400" fill="none" stroke="#9a9a9a" stroke-width="1"/></svg>
<svg style="position:absolute;left:646px;top:450.5px;" width="7" height="7" viewBox="0 0 7 7"><rect x=".8" y=".8" width="5.400" height="5.400" fill="none" stroke="#9a9a9a" stroke-width="1"/></svg>
<svg style="position:absolute;left:657px;top:450.5px;" width="7" height="7" viewBox="0 0 7 7"><rect x=".8" y=".8" width="5.400" height="5.400" fill="none" stroke="#9a9a9a" stroke-width="1"/></svg>
<svg style="position:absolute;left:673px;top:450.5px;" width="7" height="7" viewBox="0 0 7 7"><rect x=".8" y=".8" width="5.400" height="5.400" fill="none" stroke="#9a9a9a" stroke-width="1"/></svg>
<div style="position:absolute;left:299.8px;top:212.6px;width:122.4px;height:201.6px;background:#f3f3f3;border-radius:3.400px;box-shadow:0 0 0 .5px rgba(0,0,0,.13),0 2px 7px rgba(0,0,0,.28);"></div>
<span style="position:absolute;top:214px;line-height:13px;font-size:9.6px;white-space:pre;color:#262626;left:313.80px;transform-origin:0 50%;-webkit-text-stroke:.15px #262626;">Undo Move</span>
<span style="position:absolute;top:227px;line-height:13px;font-size:9.6px;white-space:pre;color:#b4b4b4;left:313.80px;transform-origin:0 50%;">Redo</span>
<div style="position:absolute;left:299.8px;top:243.9px;width:122.4px;height:1px;background:#dedede;"></div>
<span style="position:absolute;top:247px;line-height:13px;font-size:9.6px;white-space:pre;color:#b4b4b4;left:313.80px;transform-origin:0 50%;">Perspective</span>
<svg style="position:absolute;left:408px;top:251.20000000000002px;" width="6.5" height="6.4" viewBox="0 0 6.5 6.4"><path d="M.3.300L6 3.200.3 6.100z" fill="#a8a8a8"/></svg>
<div style="position:absolute;left:299.8px;top:264.5px;width:122.4px;height:1px;background:#dedede;"></div>
<span style="position:absolute;top:268px;line-height:13px;font-size:9.6px;white-space:pre;color:#262626;left:313.80px;transform-origin:0 50%;-webkit-text-stroke:.15px #262626;">Isolate Selected Path</span>
<span style="position:absolute;top:281px;line-height:13px;font-size:9.6px;white-space:pre;color:#262626;left:313.80px;transform-origin:0 50%;-webkit-text-stroke:.15px #262626;">Group</span>
<span style="position:absolute;top:294px;line-height:13px;font-size:9.6px;white-space:pre;color:#262626;left:313.80px;transform-origin:0 50%;-webkit-text-stroke:.15px #262626;">Join</span>
<span style="position:absolute;top:306px;line-height:13px;font-size:9.6px;white-space:pre;color:#262626;left:313.80px;transform-origin:0 50%;-webkit-text-stroke:.15px #262626;">Average...</span>
<div style="position:absolute;left:299.8px;top:323.3px;width:122.4px;height:1px;background:#dedede;"></div>
<span style="position:absolute;top:327px;line-height:13px;font-size:9.6px;white-space:pre;color:#262626;left:313.80px;transform-origin:0 50%;-webkit-text-stroke:.15px #262626;">Make Clipping Mask</span>
<span style="position:absolute;top:340px;line-height:13px;font-size:9.6px;white-space:pre;color:#262626;left:313.80px;transform-origin:0 50%;-webkit-text-stroke:.15px #262626;">Make Compound Path</span>
<span style="position:absolute;top:352px;line-height:13px;font-size:9.6px;white-space:pre;color:#262626;left:313.80px;transform-origin:0 50%;-webkit-text-stroke:.15px #262626;">Make Guides</span>
<div style="position:absolute;left:299.8px;top:369.4px;width:122.4px;height:1px;background:#dedede;"></div>
<span style="position:absolute;top:373px;line-height:13px;font-size:9.6px;white-space:pre;color:#262626;left:313.80px;transform-origin:0 50%;-webkit-text-stroke:.15px #262626;">Transform</span>
<svg style="position:absolute;left:408px;top:377.0px;" width="6.5" height="6.4" viewBox="0 0 6.5 6.4"><path d="M.3.300L6 3.200.3 6.100z" fill="#3a3a3a"/></svg>
<div style="position:absolute;left:299.8px;top:387.0px;width:122.4px;height:12.6px;background:#6f8ffa;"></div>
<span style="position:absolute;top:386px;line-height:13px;font-size:9.6px;white-space:pre;color:#ffffff;left:313.80px;transform-origin:0 50%;-webkit-text-stroke:.15px #ffffff;">Arrange</span>
<svg style="position:absolute;left:408px;top:389.90000000000003px;" width="6.5" height="6.4" viewBox="0 0 6.5 6.4"><path d="M.3.300L6 3.200.3 6.100z" fill="#ffffff"/></svg>
<span style="position:absolute;top:399px;line-height:13px;font-size:9.6px;white-space:pre;color:#262626;left:313.80px;transform-origin:0 50%;-webkit-text-stroke:.15px #262626;">Select</span>
<svg style="position:absolute;left:408px;top:402.5px;" width="6.5" height="6.4" viewBox="0 0 6.5 6.4"><path d="M.3.300L6 3.200.3 6.100z" fill="#3a3a3a"/></svg>
<div style="position:absolute;left:422.4px;top:384.4px;width:131.4px;height:76.2px;background:#f3f3f3;border-radius:3.400px;box-shadow:0 0 0 .5px rgba(0,0,0,.13),0 2px 7px rgba(0,0,0,.28);"></div>
<span style="position:absolute;top:386px;line-height:13px;font-size:9.6px;white-space:pre;color:#262626;left:436.30px;transform-origin:0 50%;-webkit-text-stroke:.15px #262626;">Bring to Front</span>
<span style="position:absolute;top:386px;line-height:13px;font-size:9.6px;white-space:pre;color:#262626;right:197.70px;transform-origin:100% 50%;">]</span>
<svg style="position:absolute;left:530.1px;top:389.1px;" width="8.4" height="8.4" viewBox="0 0 8.4 8.4"><path d="M3 3H5.400V5.400H3ZM3 3H1.850A1.150 1.150 0 1 1 3 1.850ZM5.400 3V1.850A1.150 1.150 0 1 1 6.550 3ZM5.400 5.400H6.550A1.150 1.150 0 1 1 5.400 6.550ZM3 5.400V6.550A1.150 1.150 0 1 1 1.850 5.400Z" fill="none" stroke="#262626" stroke-width=".75"/></svg>
<svg style="position:absolute;left:521px;top:388.70000000000005px;" width="8" height="9" viewBox="0 0 8 9"><path d="M3.900.700L7.300 4.300H5.500V8H2.300V4.300H.5Z" fill="none" stroke="#262626" stroke-width=".85" stroke-linejoin="round"/></svg>
<span style="position:absolute;top:399px;line-height:13px;font-size:9.6px;white-space:pre;color:#262626;left:436.30px;transform-origin:0 50%;-webkit-text-stroke:.15px #262626;">Bring Forward</span>
<span style="position:absolute;top:399px;line-height:13px;font-size:9.6px;white-space:pre;color:#262626;right:197.70px;transform-origin:100% 50%;">]</span>
<svg style="position:absolute;left:530.1px;top:401.8px;" width="8.4" height="8.4" viewBox="0 0 8.4 8.4"><path d="M3 3H5.400V5.400H3ZM3 3H1.850A1.150 1.150 0 1 1 3 1.850ZM5.400 3V1.850A1.150 1.150 0 1 1 6.550 3ZM5.400 5.400H6.550A1.150 1.150 0 1 1 5.400 6.550ZM3 5.400V6.550A1.150 1.150 0 1 1 1.850 5.400Z" fill="none" stroke="#262626" stroke-width=".75"/></svg>
<span style="position:absolute;top:411px;line-height:13px;font-size:9.6px;white-space:pre;color:#262626;left:436.30px;transform-origin:0 50%;-webkit-text-stroke:.15px #262626;">Send Backward</span>
<span style="position:absolute;top:411px;line-height:13px;font-size:9.6px;white-space:pre;color:#262626;right:197.70px;transform-origin:100% 50%;">[</span>
<svg style="position:absolute;left:530.1px;top:414.4px;" width="8.4" height="8.4" viewBox="0 0 8.4 8.4"><path d="M3 3H5.400V5.400H3ZM3 3H1.850A1.150 1.150 0 1 1 3 1.850ZM5.400 3V1.850A1.150 1.150 0 1 1 6.550 3ZM5.400 5.400H6.550A1.150 1.150 0 1 1 5.400 6.550ZM3 5.400V6.550A1.150 1.150 0 1 1 1.850 5.400Z" fill="none" stroke="#262626" stroke-width=".75"/></svg>
<div style="position:absolute;left:422.4px;top:441.3px;width:131.4px;height:1px;background:#dedede;"></div>
<span style="position:absolute;top:445px;line-height:13px;font-size:9.6px;white-space:pre;color:#b4b4b4;left:436.30px;transform-origin:0 50%;">Send to Current Layer</span>
<div style="position:absolute;left:688px;top:467px;width:11px;height:53px;background:#484848;"></div>
<svg style="position:absolute;left:690px;top:500.5px;" width="7" height="5" viewBox="0 0 7 5"><path d="M.4.400h6.200L3.500 4.400z" fill="#e0e0e0"/></svg>
<div style="position:absolute;left:0;top:399px;width:740px;height:7px;background:linear-gradient(rgba(0,0,0,0),rgba(0,0,0,.05) 25%,rgba(0,0,0,.16) 45%,rgba(0,0,0,.33) 65%,rgba(0,0,0,.52) 82%,rgba(0,0,0,.70));"></div>
<div style="position:absolute;left:0px;top:406px;width:740px;height:108px;background:rgba(0,0,0,.70);"></div>
<div style="position:absolute;left:422.4px;top:425px;width:131.4px;height:12.4px;background:#222e62;"></div>
<span style="position:absolute;top:424px;line-height:13px;font-size:9.6px;white-space:pre;color:#4f5a84;left:436.30px;transform-origin:0 50%;">Send to Back</span>
<span style="position:absolute;top:424px;line-height:13px;font-size:9.6px;white-space:pre;color:#525d88;right:197.70px;transform-origin:100% 50%;">[</span>
<svg style="position:absolute;left:530.1px;top:427.1px;" width="8.4" height="8.4" viewBox="0 0 8.4 8.4"><path d="M3 3H5.400V5.400H3ZM3 3H1.850A1.150 1.150 0 1 1 3 1.850ZM5.400 3V1.850A1.150 1.150 0 1 1 6.550 3ZM5.400 5.400H6.550A1.150 1.150 0 1 1 5.400 6.550ZM3 5.400V6.550A1.150 1.150 0 1 1 1.850 5.400Z" fill="none" stroke="#525d88" stroke-width=".75"/></svg>
<svg style="position:absolute;left:521px;top:426.70000000000005px;" width="8" height="9" viewBox="0 0 8 9"><path d="M3.900.700L7.300 4.300H5.500V8H2.300V4.300H.5Z" fill="none" stroke="#525d88" stroke-width=".85" stroke-linejoin="round"/></svg>
<span style="position:absolute;top:436px;line-height:24px;font-size:20.55px;white-space:pre;color:#ffffff;left:32.00px;transform-origin:0 50%;transform-origin:0 19.5px;transform:scaleY(.93);-webkit-text-stroke:.2px #fff;">6c. Stretch the new fretboard end line past the fretboard edges, then send</span>
<span style="position:absolute;top:462px;line-height:24px;font-size:20.55px;white-space:pre;color:#ffffff;left:108.00px;transform-origin:0 50%;transform-origin:0 19.5px;transform:scale(1.003,.93);-webkit-text-stroke:.2px #fff;">it behind the other lines: Object &gt; Arrange &gt; Send to Back</span>
<div style="position:absolute;left:0px;top:508.8px;width:262px;height:11.2px;background:#393939;"></div>
<div style="position:absolute;left:0px;top:508.8px;width:262px;height:1.6px;background:#1f1f1f;"></div>
<div style="position:absolute;left:0px;top:510.4px;width:9.5px;height:9.6px;background:#5a5a5a;"></div>
<span style="position:absolute;top:510px;line-height:11px;font-size:7.5px;white-space:pre;color:#f0f0f0;left:-1.20px;transform-origin:0 50%;transform:scaleX(0.900);">29</span>
<div style="position:absolute;left:10.5px;top:510.4px;width:9px;height:9.6px;background:#444;"></div>
<svg style="position:absolute;left:12.2px;top:513.6px;" width="6" height="4" viewBox="0 0 6 4"><path d="M.3.300h5.200L2.900 3.600z" fill="#e4e4e4"/></svg>
<svg style="position:absolute;left:26.5px;top:513px;" width="6" height="5" viewBox="0 0 6 5"><path d="M.6.300v4.400" stroke="#5c5c5c" stroke-width=".9"/><path d="M5 .3L1.600 2.500 5 4.700z" fill="#5c5c5c"/></svg>
<svg style="position:absolute;left:38.5px;top:513px;" width="5" height="5" viewBox="0 0 5 5"><path d="M4 .3L.6 2.500 4 4.700z" fill="#5c5c5c"/></svg>
<div style="position:absolute;left:49px;top:510.4px;width:27.5px;height:9.6px;background:linear-gradient(90deg,#4c4c4c,#5c5c5c 60%,#6a6a6a);"></div>
<span style="position:absolute;top:510px;line-height:11px;font-size:7.5px;white-space:pre;color:#ffffff;font-weight:bold;left:51.00px;transform-origin:0 50%;transform:scaleX(0.900);">1</span>
<div style="position:absolute;left:77.5px;top:510.4px;width:9.5px;height:9.6px;background:#444;"></div>
<svg style="position:absolute;left:79.3px;top:513.6px;" width="6" height="4" viewBox="0 0 6 4"><path d="M.3.300h5.200L2.900 3.600z" fill="#e4e4e4"/></svg>
<svg style="position:absolute;left:93.5px;top:513px;" width="5" height="5" viewBox="0 0 5 5"><path d="M.6.300L4 2.500.6 4.700z" fill="#5c5c5c"/></svg>
<svg style="position:absolute;left:104px;top:513px;" width="6" height="5" viewBox="0 0 6 5"><path d="M.6.300L4 2.500.6 4.700z" fill="#5c5c5c"/><path d="M5 .3v4.400" stroke="#5c5c5c" stroke-width=".9"/></svg>
<div style="position:absolute;left:114px;top:508.8px;width:1px;height:11.2px;background:#262626;"></div>
<div style="position:absolute;left:115px;top:510.4px;width:145px;height:9.6px;background:linear-gradient(#303030,#3a3a3a);"></div>
<span style="position:absolute;top:510px;line-height:11px;font-size:7.5px;white-space:pre;color:#dcdcdc;left:156.70px;transform-origin:0 50%;transform:scaleX(0.958);">Direct Selection</span>
<svg style="position:absolute;left:253px;top:512.6px;" width="5" height="6" viewBox="0 0 5 6"><path d="M.4.400L4.200 3 .4 5.600z" fill="#e0e0e0"/></svg>
<div style="position:absolute;left:260px;top:508.8px;width:2px;height:11.2px;background:#1e1e1e;"></div>
<div style="position:absolute;left:262px;top:508.8px;width:426px;height:4.4px;background:#111111;"></div>
<div style="position:absolute;left:262px;top:513.2px;width:198px;height:6.8px;background:linear-gradient(#1c1c1c,#262626);"></div>
<div style="position:absolute;left:460px;top:510.4px;width:11px;height:9.6px;background:linear-gradient(#888,#5e5e5e);"></div>
<div style="position:absolute;left:471px;top:513.2px;width:205px;height:6.8px;background:linear-gradient(#262626,#323232);"></div>
<svg style="position:absolute;left:264.5px;top:512.6px;" width="5" height="6" viewBox="0 0 5 6"><path d="M4.600.400L.8 3 4.600 5.600z" fill="#f0f0f0"/></svg>
<div style="position:absolute;left:676px;top:513.2px;width:12px;height:6.8px;background:#363636;"></div>
<svg style="position:absolute;left:679.5px;top:512.6px;" width="5" height="6" viewBox="0 0 5 6"><path d="M.4.400L4.200 3 .4 5.600z" fill="#f4f4f4"/></svg>
<div style="position:absolute;left:688px;top:508.8px;width:10.5px;height:5px;background:#1b1a16;"></div>
<div style="position:absolute;left:688px;top:513.8px;width:10.5px;height:6.2px;background:#494949;"></div>
<div style="position:absolute;left:698.5px;top:508.8px;width:1.5px;height:11.2px;background:#141414;"></div>
<div style="position:absolute;left:700px;top:513.8px;width:40px;height:6.2px;background:linear-gradient(#5c5c5c,#3a3a3a);"></div>
</div></body></html>
